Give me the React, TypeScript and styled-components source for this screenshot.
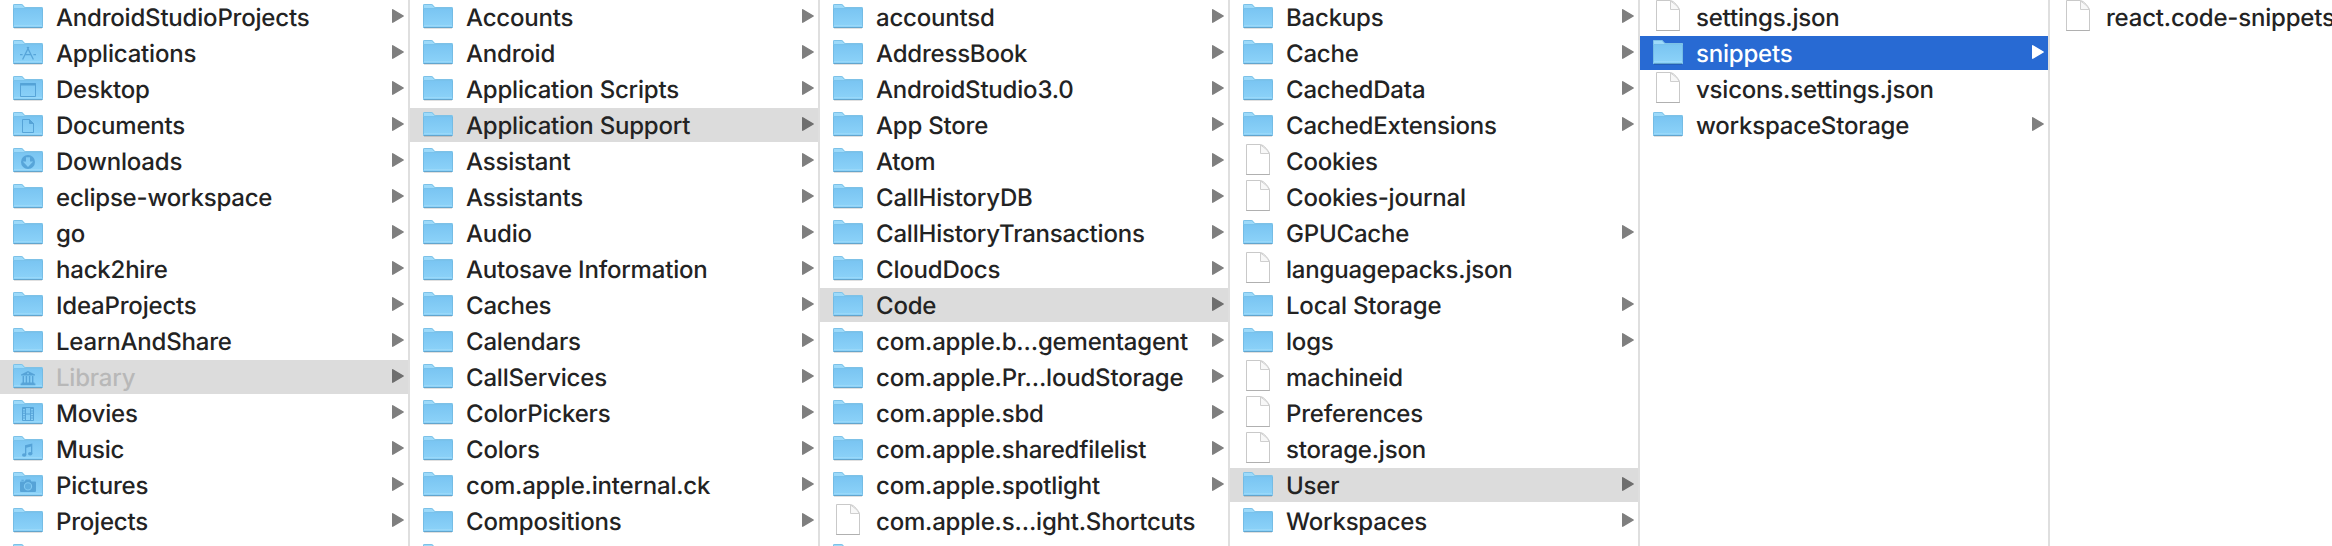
import React from 'react';
import styled, { createGlobalStyle } from 'styled-components';

const GlobalStyle = createGlobalStyle`
  body { margin: 0; background: #fff; overflow: hidden; }
`;

type Glyph = 'apps' | 'desktop' | 'document' | 'download' | 'library' | 'movie' | 'music' | 'camera';
type State = 'normal' | 'path' | 'active';
interface Entry {
  name: string;
  file?: boolean;
  glyph?: Glyph;
  state?: State;
  dimmed?: boolean;
}

const Browser = styled.main`
  display: flex;
  width: 2332px;
  height: 546px;
  overflow: hidden;
  background: #fff;
  font-family: Inter, 'Liberation Sans', sans-serif;
`;

const Column = styled.section`
  box-sizing: border-box;
  flex: 0 0 410px;
  height: 546px;
  overflow: hidden;
  border-right: 2px solid #dfdfdf;
  display: flex;
  flex-direction: column;
  gap: 2px;

  &:last-child {
    flex: 0 0 282px;
    border-right: 0;
  }
`;

const rowBackground: Record<State, string> = { normal: 'transparent', path: '#dcdcdc', active: '#286ad3' };
const arrowColor: Record<State, string> = { normal: '#7f7f7f', path: '#6e6e6e', active: '#fff' };

const Row = styled.div<{ $state: State; $dimmed?: boolean }>`
  box-sizing: border-box;
  flex: 0 0 34px;
  height: 34px;
  min-height: 0;
  display: flex;
  align-items: flex-start;
  padding: 0 4px 0 13px;
  background: ${(p) => rowBackground[p.$state]};
  color: ${(p) => (p.$state === 'active' ? '#fff' : p.$dimmed ? '#b8b8b8' : '#232323')};
`;

const IconBox = styled.svg`
  flex: 0 0 30px;
  width: 30px;
  height: 34px;
  margin-right: 13px;
`;

const Label = styled.span`
  box-sizing: border-box;
  flex: 1;
  min-width: 0;
  height: 34px;
  padding-top: 1px;
  white-space: nowrap;
  font-size: 24px;
  font-weight: 450;
  line-height: 33px;
  letter-spacing: -0.2px;
  text-rendering: geometricPrecision;
`;

const Arrow = styled.svg`
  flex: 0 0 12px;
  width: 12px;
  height: 34px;
`;

const SharedDefs = styled.svg`
  position: absolute;
`;

const glyphs: Record<Glyph, React.ReactNode> = {
  apps: (
    <g fill="none" stroke="#4f9dd3" strokeWidth="1.3">
      <path d="M15.8 11 L9.6 23.5 M14.2 11 L20.4 23.5 M7 18.7 h2.6 M12 18.7 h6 M20.4 18.7 h2.6" />
    </g>
  ),
  desktop: (
    <g fill="none" stroke="#4f9dd3">
      <path d="M7.5 11.5 h15 v13 h-15z" />
      <path d="M7 12.5 h16" strokeWidth="2" />
    </g>
  ),
  document: (
    <g stroke="#4f9dd3">
      <path d="M9.5 11.5 h7 l4 4 v9 h-11z" fill="none" />
      <path d="M16.5 11.5 v4 h4z" fill="#4f9dd3" />
    </g>
  ),
  download: (
    <path
      fill="#4f9dd3"
      fillRule="evenodd"
      d="M15 11a7 7 0 1 0 0 14a7 7 0 1 0 0-14z M13 13.2h4v4.4h3.2L15 23l-5.2-5.4H13z"
    />
  ),
  library: (
    <g fill="#4f9dd3">
      <path fillRule="evenodd" d="M15 11 L22 14.4 V15.5 H8 V14.4z M15 12.4a.9.9 0 1 0 0 1.8a.9.9 0 1 0 0-1.8z" />
      <path d="M9.6 16h1.4v6.6H9.6z M12.7 16h1.4v6.6h-1.4z M15.9 16h1.4v6.6h-1.4z M19 16h1.4v6.6H19z M8.6 22.6h12.8v1H22.4v1.6H7.6v-1.6h1z" />
    </g>
  ),
  movie: (
    <g fill="none" stroke="#4f9dd3">
      <path d="M9.5 11.5h11v13h-11z M12.5 11.5v13 M17.5 11.5v13 M12.5 18h5" />
      <path d="M11 12v12 M19 12v12" strokeWidth="2" strokeDasharray="1 1.4" />
    </g>
  ),
  music: (
    <g fill="#4f9dd3">
      <path d="M12 13.2 L19.3 11.4 V22 h-1.3 V14.6 L13.3 15.8 V23 H12z" />
      <ellipse cx="11.2" cy="23" rx="2.2" ry="1.7" />
      <ellipse cx="17.2" cy="21.8" rx="2.2" ry="1.7" />
    </g>
  ),
  camera: (
    <g>
      <path d="M8 13.4h3.6l1.2-1.8h4.4L18.4 13.4H22a1 1 0 0 1 1 1v8.5a1 1 0 0 1-1 1H8a1 1 0 0 1-1-1V14.4a1 1 0 0 1 1-1z M8.4 11.8h2.4v1H8.4z" fill="#4f9dd3" />
      <circle cx="15" cy="18.4" r="3.6" fill="#5aa9dd" stroke="#82caf3" strokeWidth="1.1" />
    </g>
  ),
};

function FolderIcon({ glyph }: { glyph?: Glyph }) {
  return (
    <IconBox viewBox="0 0 30 34">
      <path d="M1 28.5h28" stroke="#000" strokeOpacity=".12" />
      <path d="M0 27V5.2Q0 4 1.2 4H8.4Q9.4 4 10 4.8L11 6.2Q11.6 7 12.6 7H28.8Q30 7 30 8.2V27Q30 28 29 28H1Q0 28 0 27z" fill="#9ddafa" />
      <path d="M0 9h30v18q0 1-1 1H1q-1 0-1-1z" fill="url(#folderFace)" />
      <path d="M.5 26.5V5.4Q.5 4.5 1.4 4.5H8.2Q9.2 4.5 9.8 5.3L10.7 6.6Q11.4 7.5 12.4 7.5H28.6Q29.5 7.5 29.5 8.4V26.5" fill="none" stroke="#6fb6de" strokeOpacity=".7" />
      <path d="M1 8.5h28" stroke="#6fbbe8" strokeOpacity=".8" />
      <path d="M.6 27.5h28.8" stroke="#63a5cd" />
      <path d="M1 25.5h28" stroke="#a0dcfa" strokeOpacity=".7" />
      {glyph && <g opacity=".85">{glyphs[glyph]}</g>}
    </IconBox>
  );
}

function FileIcon() {
  return (
    <IconBox viewBox="0 0 30 34">
      <path d="M3.5 .5H17.5Q20 .8 23 4.2T26.5 9.6V30.5H3.5z" fill="#fff" stroke="#c9c9c9" />
      <path d="M3.2 30.5h23.6" stroke="#b0b0b0" />
      <path d="M17.5 1V9.5H26.2Q25 6.5 22.5 4.8Q20 2.6 17.5 1z" fill="#f8f8f8" stroke="#cfcfcf" />
    </IconBox>
  );
}

const folders = (...names: string[]): Entry[] => names.map((name) => ({ name }));
const files = (...names: string[]): Entry[] => names.map((name) => ({ name, file: true }));
const selected = (name: string, state: State = 'path'): Entry => ({ name, state });

const columns: Entry[][] = [
  [
    { name: 'AndroidStudioProjects' },
    { name: 'Applications', glyph: 'apps' },
    { name: 'Desktop', glyph: 'desktop' },
    { name: 'Documents', glyph: 'document' },
    { name: 'Downloads', glyph: 'download' },
    ...folders('eclipse-workspace', 'go', 'hack2hire', 'IdeaProjects', 'LearnAndShare'),
    { name: 'Library', glyph: 'library', state: 'path', dimmed: true },
    { name: 'Movies', glyph: 'movie' },
    { name: 'Music', glyph: 'music' },
    { name: 'Pictures', glyph: 'camera' },
    ...folders('Projects', ''),
  ],
  [
    ...folders('Accounts', 'Android', 'Application Scripts'),
    selected('Application Support'),
    ...folders('Assistant', 'Assistants', 'Audio', 'Autosave Information', 'Caches', 'Calendars', 'CallServices', 'ColorPickers', 'Colors', 'com.apple.internal.ck', 'Compositions', ''),
  ],
  [
    ...folders('accountsd', 'AddressBook', 'AndroidStudio3.0', 'App Store', 'Atom', 'CallHistoryDB', 'CallHistoryTransactions', 'CloudDocs'),
    selected('Code'),
    ...folders('com.apple.b…gementagent', 'com.apple.Pr…loudStorage', 'com.apple.sbd', 'com.apple.sharedfilelist', 'com.apple.spotlight'),
    ...files('com.apple.s…ight.Shortcuts'),
    ...folders(''),
  ],
  [
    ...folders('Backups', 'Cache', 'CachedData', 'CachedExtensions'),
    ...files('Cookies', 'Cookies-journal'),
    ...folders('GPUCache'),
    ...files('languagepacks.json'),
    ...folders('Local Storage', 'logs'),
    ...files('machineid', 'Preferences', 'storage.json'),
    selected('User'),
    ...folders('Workspaces'),
  ],
  [
    ...files('settings.json'),
    selected('snippets', 'active'),
    ...files('vsicons.settings.json'),
    ...folders('workspaceStorage'),
  ],
  files('react.code-snippets'),
];

function BrowserRow({ entry }: { entry: Entry }) {
  const state = entry.state ?? 'normal';
  return (
    <Row $state={state} $dimmed={entry.dimmed}>
      {entry.file ? <FileIcon /> : <FolderIcon glyph={entry.glyph} />}
      <Label>{entry.name}</Label>
      {!entry.file && (
        <Arrow viewBox="0 0 12 34">
          <path d="M.7 9.8L11.2 16L.7 22.2z" fill={arrowColor[state]} stroke={arrowColor[state]} strokeWidth="1.4" strokeLinejoin="round" />
        </Arrow>
      )}
    </Row>
  );
}

export default function App() {
  return (
    <Browser>
      <GlobalStyle />
      <SharedDefs width="0" height="0">
        <defs>
          <linearGradient id="folderFace" x1="0" y1="0" x2="0" y2="1">
            <stop offset="0" stopColor="#7ac5f2" />
            <stop offset="1" stopColor="#8dd3f9" />
          </linearGradient>
        </defs>
      </SharedDefs>
      {columns.map((entries, i) => (
        <Column key={i}>
          {entries.map((entry, j) => (
            <BrowserRow key={j} entry={entry} />
          ))}
        </Column>
      ))}
    </Browser>
  );
}
